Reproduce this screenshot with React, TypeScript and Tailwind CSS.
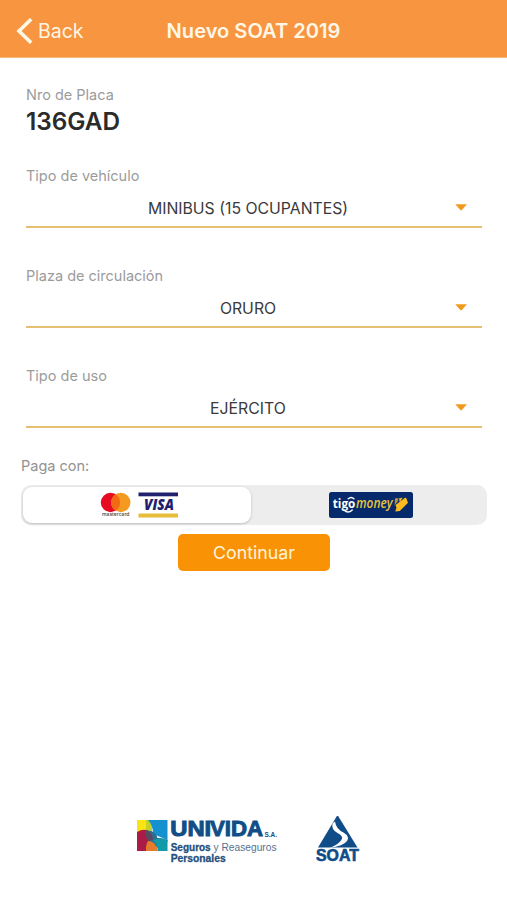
import React from "react";

type Field = {
	label: string;
	value: string;
};

const fields: Field[] = [
	{ label: "Tipo de vehículo", value: "MINIBUS (15 OCUPANTES)" },
	{ label: "Plaza de circulación", value: "ORURO" },
	{ label: "Tipo de uso", value: "EJÉRCITO" },
];

const SelectField = ({ label, value }: Field) => (
	<div className="h-[100px]">
		<div className="pt-px text-[14.5px] leading-5 text-[#9b9b9b]">{label}</div>
		<button type="button" className="flex h-[42px] w-full items-center border-b-2 border-[#e6bf72] pt-[6px] pr-[15px] pl-[15px]">
			<span className="flex-1 text-center text-[15.8px] leading-5 text-[#3a3a3a]">{value}</span>
			<svg className="-mt-1" width="12" height="7" viewBox="0 0 12 7">
				<path d="M0.3 0.3h11.6L7.1 5.8q-1 1-2 0Z" fill="#f19a1d" />
			</svg>
		</button>
	</div>
);

const CardLogos = () => (
	<svg width="80" height="28" viewBox="0 0 80 28" fontFamily="Inter, sans-serif">
		<circle cx="10.5" cy="11.5" r="9.7" fill="#e60a22" />
		<circle cx="20.8" cy="11.5" r="9.7" fill="#f49a20" />
		<path d="M15.6 3.3a9.7 9.7 0 0 1 0 16.4a9.7 9.7 0 0 1 0-16.4Z" fill="#f26a16" />
		<text x="2" y="25.2" fontSize="4.6" fontWeight="500" fill="#444" textLength="27.5" lengthAdjust="spacingAndGlyphs">mastercard</text>
		<rect x="38.5" y="1.5" width="39.5" height="3.8" fill="#20206e" />
		<rect x="38.5" y="22.5" width="39.5" height="4" fill="#e9bd3c" />
		<text x="44" y="19.2" fontFamily="'Open Sans', sans-serif" fontSize="15" fontStyle="italic" fontWeight="800" fill="#20206e" textLength="30" lengthAdjust="spacingAndGlyphs">VISA</text>
	</svg>
);

const TigoMoneyLogo = () => (
	<svg width="84" height="26" viewBox="0 0 84 26" fontFamily="'Open Sans', sans-serif">
		<rect width="84" height="26" rx="2.5" fill="#06296b" />
		<text x="3.8" y="16" fontSize="13" fontWeight="700" fill="#fff" textLength="22.5" lengthAdjust="spacingAndGlyphs">tigo</text>
		<path d="M19.3 6.8q2.8-2.6 5.6 0M15 18q4 4.2 8.2 0" fill="none" stroke="#fff" strokeWidth="1.5" strokeLinecap="round" />
		<text x="27" y="16" fontSize="13.5" fontStyle="italic" fontWeight="600" fill="#e8c43c" textLength="36.5" lengthAdjust="spacingAndGlyphs">money</text>
		<path d="M66.5 13l9.5-7.2 1.2 0.2 1.8 4.8-8.2 8.3-4.6 0.3 1.3-3.6Z" fill="#fdbb1f" />
		<path d="M66 6.2h3.6l-1 3.6-3 3.4Z" fill="#b39436" />
		<path d="M70 6.5l3.6-0.9-2.8 5Z" fill="#fdbb1f" />
	</svg>
);

const UnividaLogo = () => (
	<svg width="145" height="48" viewBox="0 0 145 48" fontFamily="'Liberation Sans', sans-serif">
		<rect x="1" y="4" width="12" height="14" fill="#f8e512" />
		<path d="M10 4h6v14h-6Z" fill="#c4cf2a" />
		<path d="M12 4h19.5v20L17 18Q17 9 12 4Z" fill="#1591cf" />
		<path d="M1 16q6-3.5 11-1.5l3 11-4.5 9.5H1Z" fill="#a81c46" />
		<path d="M9.5 14.5q10-1 12 7.5q5-.5 10 2v2l-10 6-7-6.5q-5-5-5-11Z" fill="#2a6f94" />
		<path d="M9.5 14.5q7 0 7.5 9.5q-3-.5-5 1q-3-5-2.5-10.5Z" fill="#594a62" />
		<path d="M12 25q7-1 10 10H10Q9.5 29 12 25Z" fill="#e57b2c" />
		<path d="M17 24q7-3 14.5 0v11H22Q21 28 17 24Z" fill="#129aa8" />
		<text x="34.2" y="20.4" fontSize="21.8" fontWeight="700" fill="#124e86" stroke="#124e86" strokeWidth="1" textLength="41" lengthAdjust="spacingAndGlyphs">UNI</text>
		<text x="74" y="20.4" fontSize="21.8" fontWeight="700" fill="#124e86" stroke="#124e86" strokeWidth="1" textLength="53" lengthAdjust="spacingAndGlyphs">VIDA</text>
		<text x="128.5" y="20.5" fontSize="7.5" fontWeight="700" fill="#124e86" textLength="12.5" lengthAdjust="spacingAndGlyphs">S.A.</text>
		<text x="34.7" y="34.5" fontSize="10.5" fontWeight="700" fill="#24507c" stroke="#24507c" strokeWidth="0.3" textLength="40" lengthAdjust="spacingAndGlyphs">Seguros</text>
		<text x="77.5" y="34.5" fontSize="10.5" fill="#56708e" textLength="63" lengthAdjust="spacingAndGlyphs">y Reaseguros</text>
		<text x="34.7" y="46" fontSize="10.5" fontWeight="700" fill="#24507c" stroke="#24507c" strokeWidth="0.3" textLength="55" lengthAdjust="spacingAndGlyphs">Personales</text>
	</svg>
);

const SoatLogo = () => (
	<svg width="46" height="48" viewBox="0 0 46 48">
		<path d="M22.5 -1L42.5 31.5H3Z" fill="#0f4c88" />
		<path d="M17.5 7.5q-1.5 6 5 9.5q7 3.500 3.500 7.500q-3 4-11.500 7.500q14-2 17.500-7q3-4.500-3.500-8.500q-7.500-3.500-8.500-11Z" fill="#fff" />
		<text x="1" y="44.5" fontFamily="'Liberation Sans', sans-serif" fontSize="16.5" fontWeight="700" fill="#0f4c88" stroke="#0f4c88" strokeWidth="0.6" textLength="43" lengthAdjust="spacingAndGlyphs">SOAT</text>
	</svg>
);

const App = () => {
	const [method, setMethod] = React.useState("card");

	return (
		<div className="flex h-[900px] w-full flex-col bg-white font-['Inter',sans-serif]">
			{/* Navigation bar */}
			<header className="grid h-[58px] grid-cols-[1fr_auto_1fr] items-center border-b border-[#f9b77c] bg-[#f79540] pt-[5px] text-[#fff7e6]">
				<button type="button" className="flex items-center gap-[5px] pl-4 text-[19.5px] leading-6">
					<svg width="17" height="26" viewBox="0 0 17 26" fill="none" stroke="currentColor" strokeWidth="3.6">
						<path d="M15.2 1.2L3 13l12.2 11.8" />
					</svg>
					Back
				</button>
				<h1 className="text-[20.1px] leading-6 font-semibold">Nuevo SOAT 2019</h1>
			</header>

			<main className="flex flex-1 flex-col pt-[27px]">
				<div className="flex h-20 flex-col pl-[26px]">
					<span className="text-[14.5px] leading-5 text-[#9b9b9b]">Nro de Placa</span>
					<span className="mt-px text-[24.3px] leading-[30px] font-semibold text-[#2b2b2b]">136GAD</span>
				</div>

				<div className="pr-[25px] pl-[26px]">
					{fields.map((field) => (
						<SelectField key={field.label} {...field} />
					))}
				</div>

				<div className="flex flex-col pr-5 pl-[21px]">
					<span className="-mt-[9px] text-[14.5px] leading-5 text-[#929292]">Paga con:</span>
					<div className="mt-[9px] grid h-10 grid-cols-[228px_1fr] rounded-[10px] bg-[#ededee] p-0.5">
						<button
							type="button"
							onClick={() => setMethod("card")}
							className={`flex items-center justify-center rounded-[9px] pl-[5px] ${method === "card" ? "bg-white shadow-[0_1px_3px_rgba(0,0,0,0.2)]" : ""}`}
						>
							<CardLogos />
						</button>
						<button
							type="button"
							onClick={() => setMethod("tigo")}
							className={`flex items-center justify-center rounded-[9px] pl-[5px] ${method === "tigo" ? "bg-white shadow-[0_1px_3px_rgba(0,0,0,0.2)]" : ""}`}
						>
							<TigoMoneyLogo />
						</button>
					</div>
					<button type="button" className="mt-[9px] h-[37px] w-[152px] self-center rounded-[5px] bg-[#f99205] pt-px text-[17.8px] text-[#fff4dc]">
						Continuar
					</button>
				</div>
			</main>

			<footer className="flex gap-[34px] pb-9 pl-[136px]">
				<UnividaLogo />
				<SoatLogo />
			</footer>
		</div>
	);
};

export default App;
